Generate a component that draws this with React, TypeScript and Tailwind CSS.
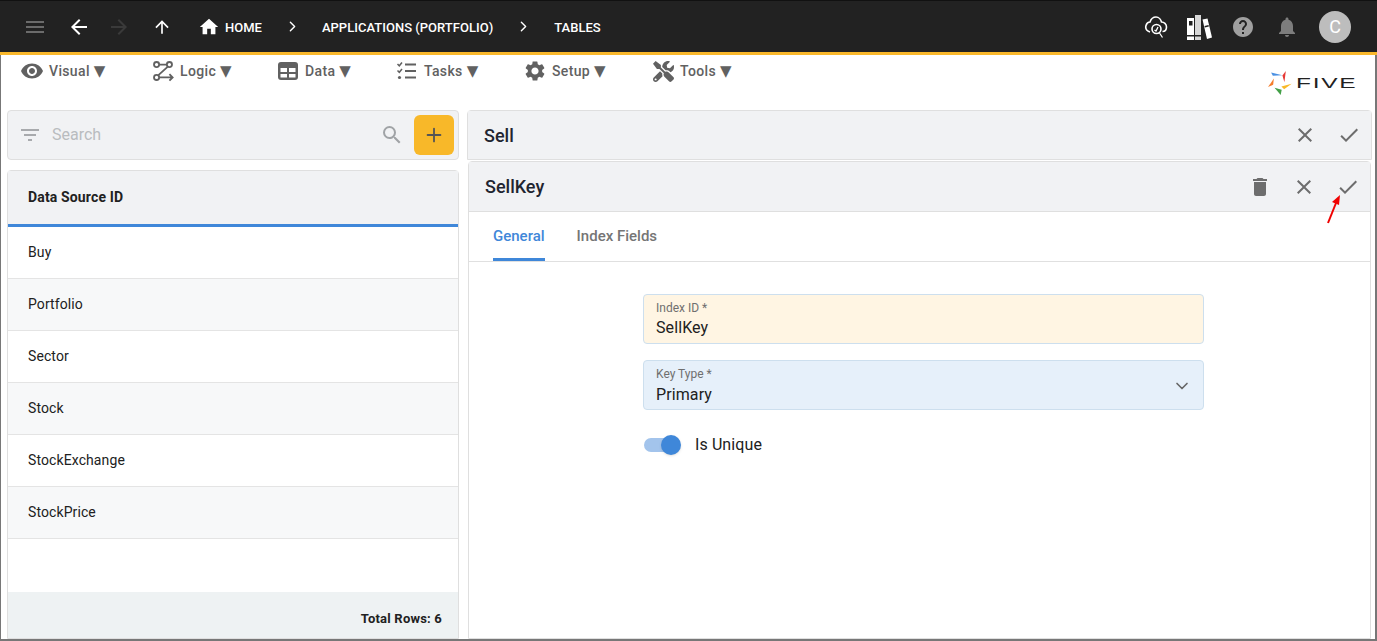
import { ChevronDown, ChevronRight, Plus } from "lucide-react";
import { FaTools } from "react-icons/fa";
import {
  MdArrowBack,
  MdArrowForward,
  MdArrowUpward,
  MdCheck,
  MdClose,
  MdDelete,
  MdFilterList,
  MdHelp,
  MdHome,
  MdMenu,
  MdNotifications,
  MdSearch,
  MdSettings,
  MdVisibility,
} from "react-icons/md";

const LogicIcon = () => (
  <svg width="22" height="22" viewBox="0 0 24 24" fill="none" stroke="currentColor" strokeWidth="2">
    <circle cx="5" cy="5" r="2.8" />
    <circle cx="19" cy="5" r="2.8" />
    <circle cx="5" cy="19" r="2.8" />
    <path d="M8 5h8M17 7.5L7 16.5M8 19h14M19 15.5l3.5 3.5-3.5 3.5" />
  </svg>
);

const DataIcon = () => (
  <svg width="22" height="22" viewBox="0 0 22 22">
    <rect x="1" y="2" width="20" height="18" rx="3" fill="currentColor" />
    <rect x="3.5" y="8" width="6.5" height="4" fill="white" />
    <rect x="12" y="8" width="6.5" height="4" fill="white" />
    <rect x="3.5" y="14" width="6.5" height="3.5" fill="white" />
    <rect x="12" y="14" width="6.5" height="3.5" fill="white" />
  </svg>
);

const TasksIcon = () => (
  <svg width="22" height="22" viewBox="0 0 22 22" fill="none" stroke="currentColor" strokeWidth="2">
    <path d="M9 4.5h11M9 11h11M9 17.5h11" />
    <path d="M1.5 4l1.8 1.8L6 2.5M1.5 10.5l1.8 1.8L6 9" strokeWidth="1.5" />
    <circle cx="3.5" cy="17.5" r="1.6" fill="currentColor" stroke="none" />
  </svg>
);

const menus = [
  { label: "Visual", icon: <MdVisibility size={24} />, width: "w-[131px]" },
  { label: "Logic", icon: <LogicIcon />, width: "w-[125px]" },
  { label: "Data", icon: <DataIcon />, width: "w-[119px]" },
  { label: "Tasks", icon: <TasksIcon />, width: "w-[128px]" },
  { label: "Setup", icon: <MdSettings size={24} />, width: "w-[128px]" },
  { label: "Tools", icon: <FaTools size={21} />, width: "w-[100px]" },
];

const rows = ["Buy", "Portfolio", "Sector", "Stock", "StockExchange", "StockPrice"];

const Logo = () => (
  <div className="flex items-center">
    <svg width="26" height="26" viewBox="36 30 74 76">
      <polygon points="47,37 80,45 52,47" fill="#4a90e2" />
      <polygon points="90,33 86,66 80,46" fill="#e53935" />
      <polygon points="55,55 38,80 53,73" fill="#f57c2a" />
      <polygon points="107,70 77,78 85,86" fill="#f9b928" />
      <polygon points="57,82 75,103 78,88" fill="#43a047" />
    </svg>
    <div className="w-[63px] pl-[3px]">
      <span className="inline-block origin-left scale-x-[1.75] font-['Liberation_Sans',sans-serif] text-[14px] leading-none tracking-[1px] text-[#222]">FIVE</span>
    </div>
  </div>
);

const Panel = ({ title, height, trash }: { title: string; height: string; trash?: boolean }) => (
  <div className={`${height} flex items-center justify-between bg-[#f1f2f4] pl-4 pr-[10px] shrink-0`}>
    <span className="text-[18px] font-medium text-[#1f2530]">{title}</span>
    <div className="flex items-center gap-5 text-[#6d6d6d]">
      {trash && <MdDelete size={24} />}
      <MdClose size={24} />
      <MdCheck size={24} />
    </div>
  </div>
);

const App = () => {
  return (
    <div className="relative h-[641px] w-[1377px] overflow-hidden bg-white font-['Roboto',sans-serif] flex flex-col text-[#212121]">
      <header className="h-[55px] shrink-0 bg-[#222222] border-t border-[#111] border-b-[3px] border-b-[#fab82b] flex items-center text-white">
        <MdMenu size={24} className="ml-[23px] text-[#6b6b6b]" />
        <MdArrowBack size={24} className="ml-5" />
        <MdArrowForward size={24} className="ml-4 text-[#3a3a3a]" />
        <MdArrowUpward size={20} className="ml-[21px]" />
        <MdHome size={22} className="ml-[26px]" />
        <span className="ml-[5px] pt-[2px] text-[13px] font-medium">HOME</span>
        <ChevronRight size={17} className="ml-[22px]" />
        <span className="ml-[21px] pt-[2px] text-[13px] font-medium tracking-[0.02px]">APPLICATIONS (PORTFOLIO)</span>
        <ChevronRight size={17} className="ml-[22px]" />
        <span className="ml-[22px] pt-[2px] text-[13px] font-medium">TABLES</span>
        <div className="ml-auto flex items-center mr-[26px]">
          <svg width="24" height="24" viewBox="0 0 24 24" fill="none" stroke="white" strokeWidth="1.6">
            <path d="M6 17c-3 -1 -5 -3 -4 -6.500s3 -3.500 4 -3.500c1 -3 3 -5 6 -5s5 3 5.500 5c2.500 0 5 2 5 5s-2 4.500 -4 4.500" />
            <circle cx="12.500" cy="14" r="4.500" />
            <path d="M15.500 18l3 4.500M10.500 15l1.500 1 2 -4" strokeWidth="1.300" />
          </svg>
          <svg width="26" height="26" viewBox="0 0 26 26" className="ml-[18px]" fill="white">
            <rect x="1" y="4" width="7" height="22" />
            <rect x="9" y="1" width="6" height="25" fill="#d8d8d8" />
            <path d="M16.500 5.500l5 -1 4.500 19 -5 1.500z" />
            <rect x="1" y="21" width="14" height="1.500" fill="#222" />
            <rect x="3" y="7" width="3.500" height="4.500" fill="#222" />
            <path d="M18.500 12l4 -1 .4 1.500 -4 1z" fill="#222" />
          </svg>
          <MdHelp size={24} className="ml-[19px] text-[#a0a0a0]" />
          <MdNotifications size={24} className="ml-5 text-[#7d7d7d]" />
          <div className="ml-5 w-8 h-8 rounded-full bg-[#bdbdbd] flex items-center justify-center text-[18px] text-white">C</div>
        </div>
      </header>

      <div className="flex-1 min-h-0 flex flex-col border-l border-r-2 border-b-2 border-[#777]">
        <div className="h-[55px] shrink-0 flex relative pl-[19px] pt-[5px] text-[#616161]">
          {menus.map((m) => (
            <div key={m.label} className={`${m.width} flex items-start gap-[5px]`}>
              <span className="w-6 h-[22px] flex items-center justify-center">{m.icon}</span>
              <span className="text-[14px] font-medium leading-[22px] tracking-[0.35px]">{m.label}</span>
              <span className="font-['DejaVu_Sans',sans-serif] text-[15px] leading-[22px] -ml-[1px]">▼</span>
            </div>
          ))}
          <div className="absolute right-[19px] top-[15px]">
            <Logo />
          </div>
        </div>

        <main className="flex-1 min-h-0 flex pl-[6px] pr-[3px]">
          <aside className="w-[452px] shrink-0 flex flex-col">
            <div className="h-[50px] shrink-0 bg-[#f1f2f4] border border-[#dfdfdf] rounded flex items-center pl-[10px] pr-[4px]">
              <MdFilterList size={24} className="text-[#a8aaad]" />
              <span className="ml-[10px] text-[16px] text-[#b9bcbf]">Search</span>
              <MdSearch size={24} className="ml-auto text-[#a0a3a6]" />
              <div className="ml-[10px] w-10 h-10 rounded-md bg-[#f8b829] flex items-center justify-center">
                <Plus size={22} className="text-[#555]" />
              </div>
            </div>
            <div className="mt-[10px] flex-1 min-h-0 border border-[#dfdfdf] rounded-t flex flex-col">
              <div className="h-[56px] shrink-0 bg-[#f1f2f4] border-b-[3px] border-[#3f87d9] flex items-center pl-5 text-[14px] font-bold tracking-[0.15px]">Data Source ID</div>
              {rows.map((r, i) => (
                <div key={r} className={`h-[52px] shrink-0 flex items-center pl-5 text-[14px] tracking-[0.1px] border-b border-[#e4e4e4] ${i % 2 === 1 ? "bg-[#f7f8f9]" : "bg-white"}`}>{r}</div>
              ))}
              <div className="flex-1" />
              <div className="h-[46px] shrink-0 bg-[#eef2f3] flex items-start justify-end pt-[18px] pr-4 text-[13px] leading-[18px] font-bold tracking-[0.2px]">Total Rows: 6</div>
            </div>
          </aside>

          <section className="ml-[8px] flex-1 min-w-0 flex flex-col">
            <div className="border border-[#dfdfdf] rounded-t shrink-0">
              <Panel title="Sell" height="h-[48px]" />
            </div>
            <div className="flex-1 min-h-0 mt-[1px] mx-[1px] border border-[#dfdfdf] rounded-t flex flex-col">
              <div className="border-b border-[#dfdfdf]">
                <Panel title="SellKey" height="h-[49px]" trash />
              </div>
              <div className="h-[50px] shrink-0 flex pl-6 gap-8 border-b border-[#e0e0e0] text-[15px] font-medium">
                <div className="h-full flex items-center pt-[3px] text-[#3f87d9] border-b-[3px] border-[#3f87d9]">General</div>
                <div className="h-full flex items-center text-[#757575]">Index Fields</div>
              </div>
              <div className="flex-1 flex flex-col items-center pt-8 pl-2">
                <div className="w-[561px]">
                  <div className="h-[50px] bg-[#fff5e3] border border-[#cddfee] rounded px-3 pt-[6px]">
                    <div className="text-[12px] leading-[14px] text-[#6f6f6f]">Index ID *</div>
                    <div className="text-[16px] leading-[26px] tracking-[0.1px]">SellKey</div>
                  </div>
                  <div className="mt-4 h-[50px] bg-[#e6f0fa] border border-[#cddfee] rounded pl-3 pr-[11px] pt-[6px] flex justify-between">
                    <div>
                      <div className="text-[12px] leading-[14px] text-[#6f6f6f]">Key Type *</div>
                      <div className="text-[16px] leading-[28px] tracking-[0.1px]">Primary</div>
                    </div>
                    <ChevronDown size={20} className="mt-[9px] text-[#666]" />
                  </div>
                  <div className="mt-[23px] flex items-center">
                    <div className="relative ml-[1px] w-[37px] h-5 flex items-center">
                      <div className="w-[34px] h-[14px] rounded-full bg-[#a3c4ec]" />
                      <div className="absolute right-0 w-5 h-5 rounded-full bg-[#3f87d9] shadow" />
                    </div>
                    <span className="ml-[14px] text-[16px] tracking-[0.1px]">Is Unique</span>
                  </div>
                </div>
              </div>
            </div>
          </section>
        </main>
      </div>

      {/* annotation arrow */}
      <svg className="absolute left-[1322px] top-[190px]" width="24" height="36" viewBox="0 0 24 36">
        <path d="M6 33L14 13" stroke="#f00000" strokeWidth="2" />
        <polygon points="18,5 10,12 17,15" fill="#f00000" />
      </svg>
    </div>
  );
};

export default App;
